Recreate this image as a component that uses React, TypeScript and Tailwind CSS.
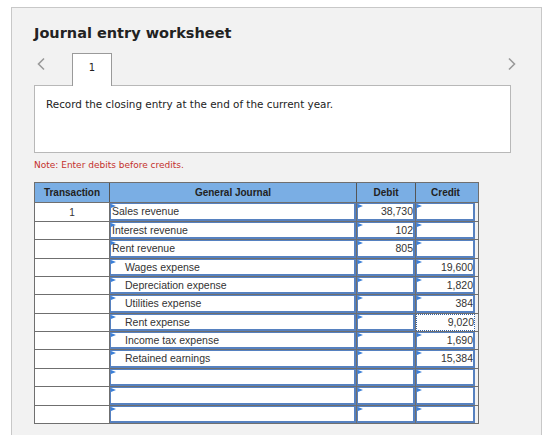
import React from 'react';

type Row = {
  tx?: string;
  account?: string;
  indent?: boolean;
  debit?: string;
  credit?: string;
  focus?: boolean;
  h: number;
};

const rows: Row[] = [
  { tx: '1', account: 'Sales revenue', debit: '38,730', h: 19 },
  { account: 'Interest revenue', debit: '102', h: 18 },
  { account: 'Rent revenue', debit: '805', h: 19 },
  { account: 'Wages expense', indent: true, credit: '19,600', h: 18 },
  { account: 'Depreciation expense', indent: true, credit: '1,820', h: 18 },
  { account: 'Utilities expense', indent: true, credit: '384', h: 19 },
  { account: 'Rent expense', indent: true, credit: '9,020', focus: true, h: 18 },
  { account: 'Income tax expense', indent: true, credit: '1,690', h: 18 },
  { account: 'Retained earnings', indent: true, credit: '15,384', h: 19 },
  { h: 18 },
  { h: 19 },
  { h: 18 },
];

// 入力セル（青い枠と左上の三角）
function InputCell({
  value,
  align = 'left',
  indent = false,
  focus = false,
}: {
  value?: string;
  align?: 'left' | 'right';
  indent?: boolean;
  focus?: boolean;
}) {
  return (
    <div className="relative h-full w-full bg-white">
      <div
        className={
          focus
            ? 'h-full w-full border border-dotted border-[#2f5fa6]'
            : 'h-full w-full border-t border-l border-r-2 border-b-2 border-[#5681c0]'
        }
      >
        <div
          className={`flex h-full items-center pt-px text-[10.5px] text-[#333] ${
            align === 'right' ? 'justify-end' : indent ? 'pl-[14px]' : 'pl-[1px]'
          }`}
        >
          {value}
        </div>
      </div>
      {!focus && (
        <span className="absolute left-[1px] top-[1px] h-0 w-0 border-y-[2.5px] border-l-[5px] border-y-transparent border-l-[#3b7fd8]" />
      )}
    </div>
  );
}

function Chevron({ dir }: { dir: 'left' | 'right' }) {
  return (
    <svg width="10" height="14" viewBox="0 0 10 14" fill="none">
      <polyline
        points={dir === 'left' ? '8,1.5 2.5,7 8,12.5' : '2,1.5 7.5,7 2,12.5'}
        stroke="#9a9a9a"
        strokeWidth="1.6"
      />
    </svg>
  );
}

export default function App() {
  return (
    <div className="h-[435px] w-[550px] overflow-hidden bg-white font-['Liberation_Sans',Arial,sans-serif]">
      <div className="ml-[11px] mt-[7px] h-[440px] w-[531px] border border-[#c8c8c8] bg-[#f2f2f2] pl-[22px] pr-[29px]">
        {/* タイトル */}
        <h1 className="pt-[16px] text-[14.5px] font-bold leading-[18px] text-[#222] font-['DejaVu_Sans',Verdana,sans-serif]">
          Journal entry worksheet
        </h1>

        {/* タブ */}
        <div className="mt-[11px] flex h-[32px] items-start">
          <div className="mt-[4px] pl-[2px]">
            <Chevron dir="left" />
          </div>
          <div className="-mb-px ml-[26px] flex h-[33px] w-[40px] justify-center border border-b-0 border-[#9a9a9a] bg-white pt-[6px] text-[10px] text-[#222] font-['DejaVu_Sans',Verdana,sans-serif]">
            1
          </div>
          <div className="ml-auto mt-[4px] -mr-[5px]">
            <Chevron dir="right" />
          </div>
        </div>

        {/* 説明 */}
        <div className="h-[68px] w-[477px] border border-[#b8b8b8] bg-white px-[11px] pt-[11px] text-[10.4px] text-[#222] font-['DejaVu_Sans',Verdana,sans-serif]">
          Record the closing entry at the end of the current year.
        </div>

        <p className="mt-[6px] text-[9px] leading-[12px] text-[#c4302b] font-['DejaVu_Sans',Verdana,sans-serif]">
          Note: Enter debits before credits.
        </p>

        {/* 仕訳表 */}
        <div className="mt-[11px] w-[445px] border border-[#6f6f6f]">
          <div className="flex h-[19px] bg-[#7aaee4] text-[10px] font-bold text-[#222]">
            <div className="flex w-[75px] items-center justify-center border-r border-[#555]">Transaction</div>
            <div className="flex w-[247px] items-center justify-center border-r border-[#555]">General Journal</div>
            <div className="flex w-[59px] items-center justify-center border-r border-[#555]">Debit</div>
            <div className="flex w-[59px] items-center justify-center">Credit</div>
          </div>
          {rows.map((r, i) => (
            <div key={i} className="flex border-t border-[#6f6f6f]" style={{ height: r.h }}>
              <div className="flex w-[75px] items-center justify-center border-r border-[#6f6f6f] bg-white text-[10px] text-[#333]">
                {r.tx}
              </div>
              <div className="w-[247px] border-r border-[#6f6f6f]">
                <InputCell value={r.account} indent={r.indent} />
              </div>
              <div className="w-[59px] border-r border-[#6f6f6f]">
                <InputCell value={r.debit} align="right" />
              </div>
              <div className="w-[59px]">
                <InputCell value={r.credit} align="right" focus={r.focus} />
              </div>
            </div>
          ))}
        </div>
      </div>
    </div>
  );
}
